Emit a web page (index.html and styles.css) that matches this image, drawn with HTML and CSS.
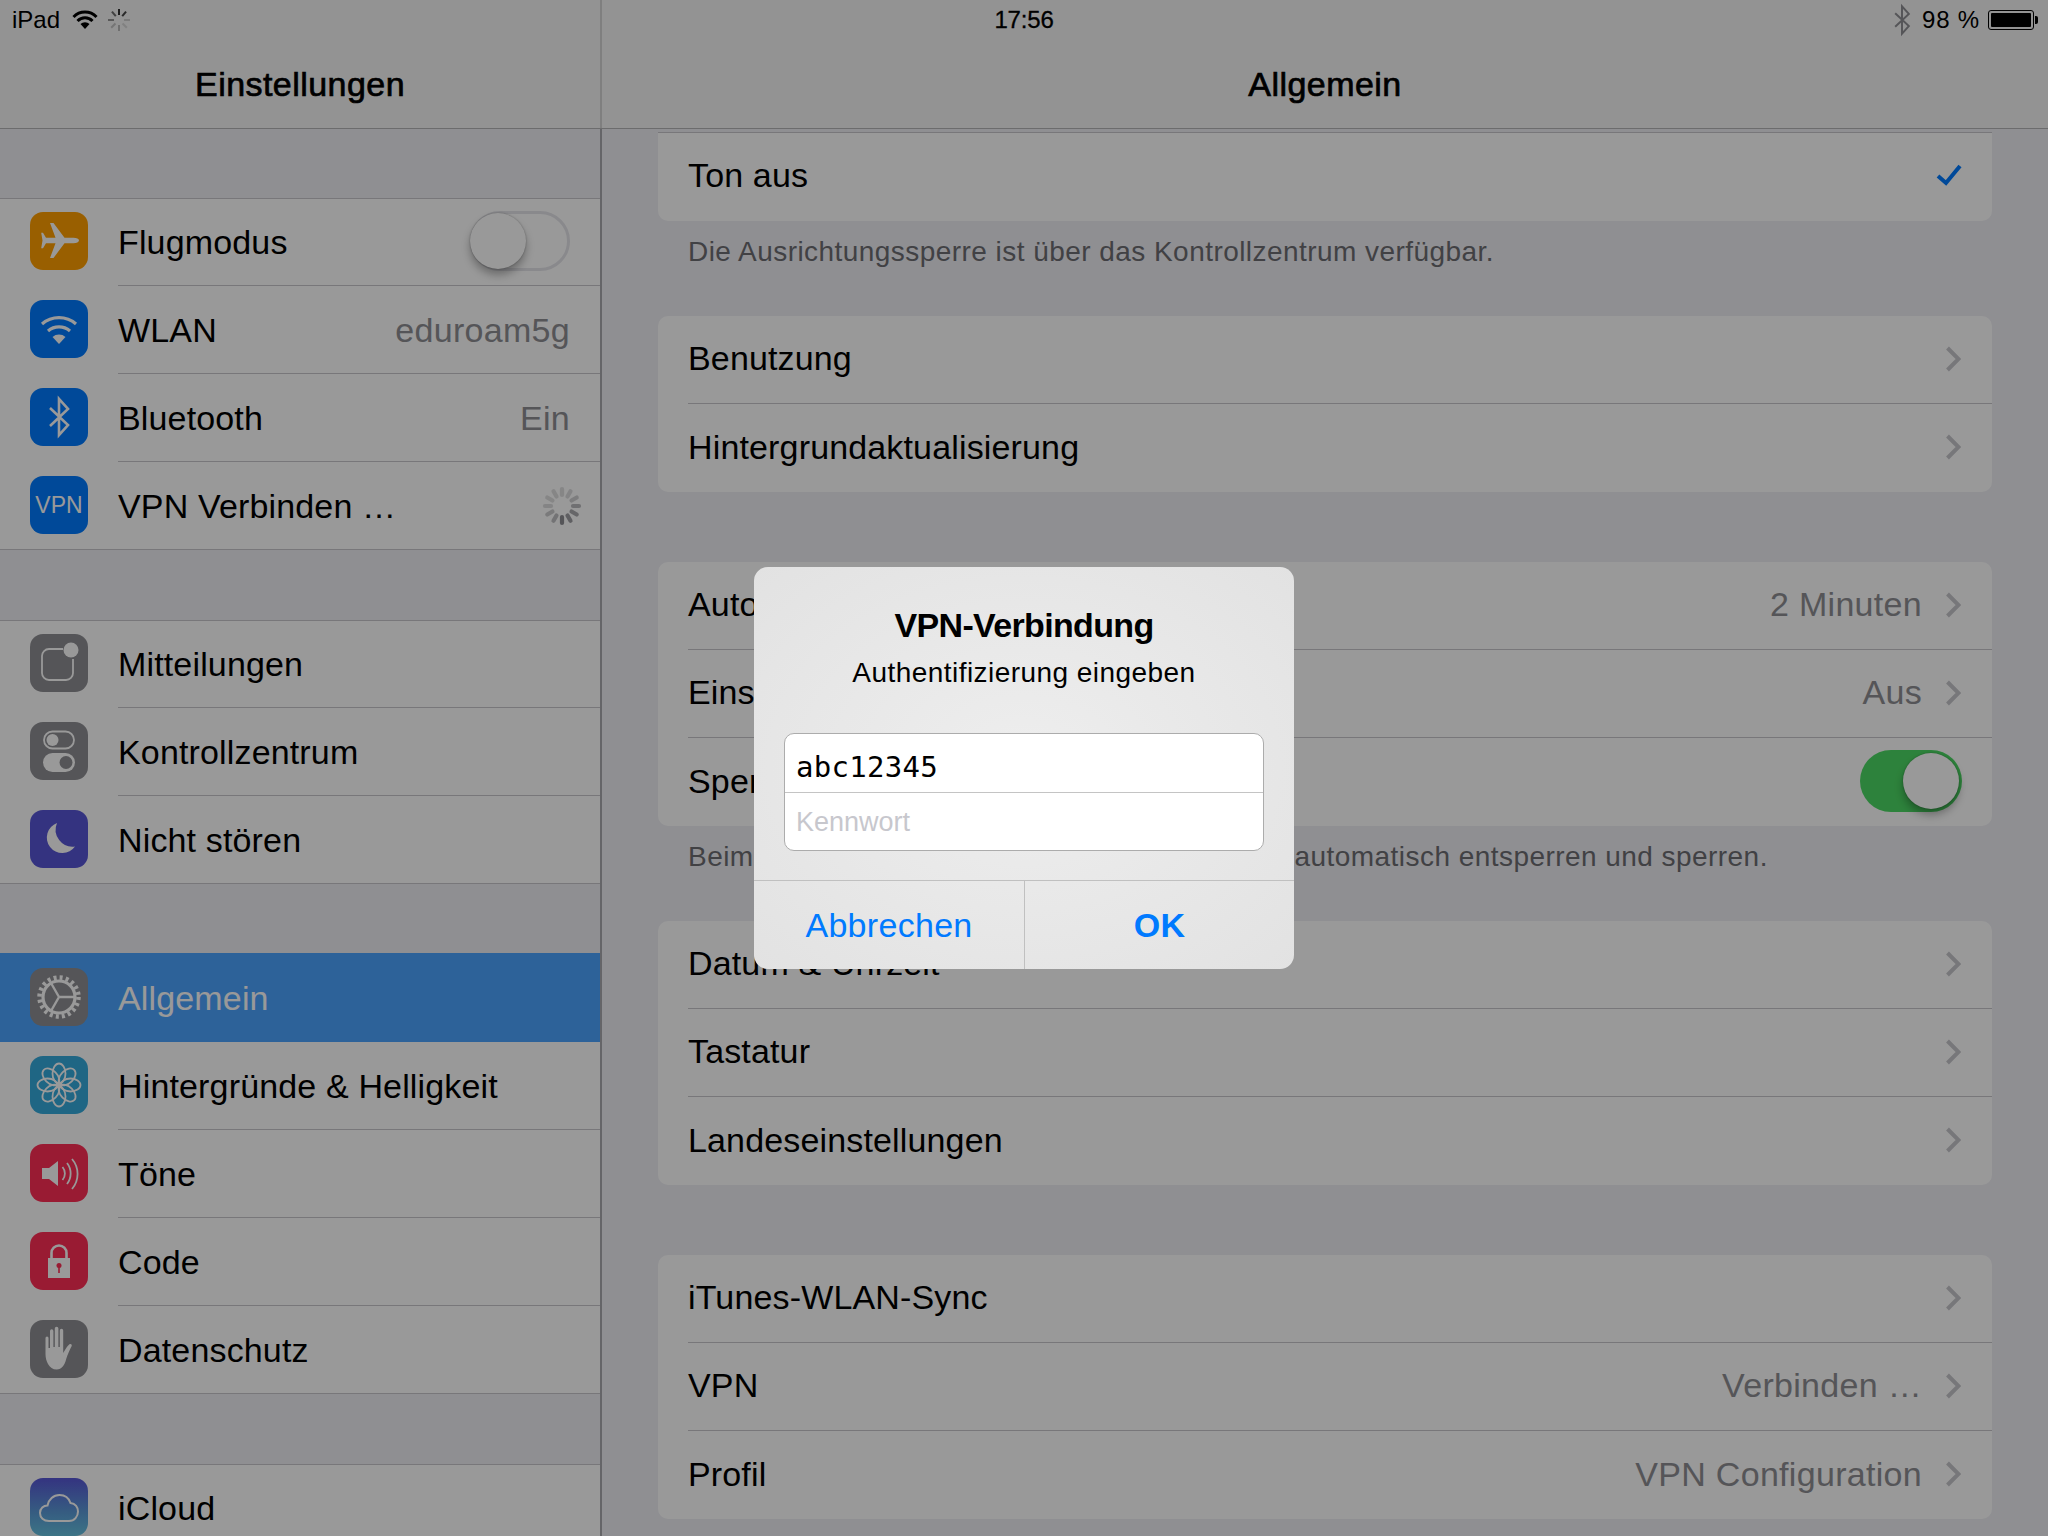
FILE: index.html
```html
<!DOCTYPE html>
<html>
<head>
  <title>Einstellungen</title>
  <meta charset="UTF-8">
  <link rel="stylesheet" href="styles.css">
</head>
<body>
  <svg class="defs" width="0" height="0">
    <symbol id="spinner" viewBox="0 0 40 40">
      <g stroke="currentColor" stroke-width="4.200" stroke-linecap="round">
        <line x1="20" y1="3" x2="20" y2="9" opacity=".28"/>
        <line x1="20" y1="3" x2="20" y2="9" opacity=".3" transform="rotate(30 20 20)"/>
        <line x1="20" y1="3" x2="20" y2="9" opacity=".4" transform="rotate(60 20 20)"/>
        <line x1="20" y1="3" x2="20" y2="9" opacity=".6" transform="rotate(90 20 20)"/>
        <line x1="20" y1="3" x2="20" y2="9" opacity=".75" transform="rotate(120 20 20)"/>
        <line x1="20" y1="3" x2="20" y2="9" opacity=".85" transform="rotate(150 20 20)"/>
        <line x1="20" y1="3" x2="20" y2="9" transform="rotate(180 20 20)"/>
        <line x1="20" y1="3" x2="20" y2="9" opacity=".55" transform="rotate(210 20 20)"/>
        <line x1="20" y1="3" x2="20" y2="9" opacity=".45" transform="rotate(240 20 20)"/>
        <line x1="20" y1="3" x2="20" y2="9" opacity=".3" transform="rotate(270 20 20)"/>
        <line x1="20" y1="3" x2="20" y2="9" opacity=".28" transform="rotate(300 20 20)"/>
        <line x1="20" y1="3" x2="20" y2="9" opacity=".28" transform="rotate(330 20 20)"/>
      </g>
    </symbol>
    <symbol id="spinner-small" viewBox="0 0 24 24">
      <g stroke="currentColor" stroke-width="2">
        <line x1="12" y1="1" x2="12" y2="7"/>
        <line x1="12" y1="1" x2="12" y2="7" opacity=".9" transform="rotate(40 12 12)"/>
        <line x1="12" y1="1" x2="12" y2="7" opacity=".2" transform="rotate(90 12 12)"/>
        <line x1="12" y1="1" x2="12" y2="7" opacity=".15" transform="rotate(135 12 12)"/>
        <line x1="12" y1="1" x2="12" y2="7" opacity=".3" transform="rotate(180 12 12)"/>
        <line x1="12" y1="1" x2="12" y2="7" opacity=".25" transform="rotate(225 12 12)"/>
        <line x1="12" y1="1" x2="12" y2="7" opacity=".5" transform="rotate(270 12 12)"/>
        <line x1="12" y1="1" x2="12" y2="7" opacity=".7" transform="rotate(320 12 12)"/>
      </g>
    </symbol>
    <symbol id="chevron" viewBox="0 0 16 26">
      <path d="M2.500 2l11 11-11 11" fill="none" stroke="currentColor" stroke-width="4"/>
    </symbol>
    <symbol id="bt" viewBox="0 0 58 58">
      <path d="M20 20l18 17-9 10V11l9 10-18 17" fill="none" stroke="currentColor" stroke-width="2.600"/>
    </symbol>
  </svg>

  <div class="app">

    <!-- status bar and titles -->
    <header class="top">
      <div class="status">
        <div class="status-left">
          <span>iPad</span>
          <svg class="status-wifi" viewBox="0 0 26 20">
            <path d="M1.500 7a16 16 0 0 1 23 0M5.500 11a10.500 10.500 0 0 1 15 0" fill="none" stroke="#000" stroke-width="3"/>
            <path d="M8.500 14a6.500 6.500 0 0 1 9 0L13 19z" fill="#000"/>
          </svg>
          <svg class="status-spinner"><use href="#spinner-small"/></svg>
        </div>
        <div class="status-time">17:56</div>
        <div class="status-right">
          <svg class="status-bt"><use href="#bt"/></svg>
          <span class="status-pct">98 %</span>
          <div class="battery"><div class="battery-fill"></div></div>
        </div>
      </div>
      <div class="titles">
        <h1 class="title">Einstellungen</h1>
        <h1 class="title">Allgemein</h1>
      </div>
    </header>

    <div class="panes">

      <!-- left column -->
      <aside class="sidebar">
        <ul class="side-group">
          <li class="side-row">
            <span class="icon icon-orange">
              <svg viewBox="0 0 58 58"><path d="M49 28.500c0-1.600-2.500-2.700-5.500-2.700H34.500L23.500 11H20l5.500 14.800H16l-3-5h-1.800l1.300 7.700-1.300 7.700H13l3-5h9.500L20 46h3.500l11-14.800h9c3 0 5.500-1.100 5.500-2.700z" fill="#fff"/></svg>
            </span>
            <span class="label">Flugmodus</span>
            <span class="switch"><span class="knob"></span></span>
          </li>
          <li class="side-row">
            <span class="icon icon-blue">
              <svg viewBox="0 0 58 58"><path d="M12 24a26 26 0 0 1 34 0M18 31a17 17 0 0 1 22 0" fill="none" stroke="#fff" stroke-width="3.200"/><path d="M22.500 37a10 10 0 0 1 13 0L29 44z" fill="#fff"/></svg>
            </span>
            <span class="label">WLAN</span>
            <span class="value">eduroam5g</span>
          </li>
          <li class="side-row">
            <span class="icon icon-blue"><svg class="icon-white"><use href="#bt"/></svg></span>
            <span class="label">Bluetooth</span>
            <span class="value">Ein</span>
          </li>
          <li class="side-row">
            <span class="icon icon-blue icon-vpn">VPN</span>
            <span class="label">VPN Verbinden …</span>
            <svg class="row-spinner"><use href="#spinner"/></svg>
          </li>
        </ul>

        <ul class="side-group">
          <li class="side-row">
            <span class="icon icon-gray">
              <svg viewBox="0 0 58 58"><path d="M33 15H19a7 7 0 0 0-7 7v17a7 7 0 0 0 7 7h17a7 7 0 0 0 7-7V25" fill="none" stroke="#fff" stroke-width="1.800"/><circle cx="41" cy="16" r="7.500" fill="#fff"/></svg>
            </span>
            <span class="label">Mitteilungen</span>
          </li>
          <li class="side-row">
            <span class="icon icon-gray">
              <svg viewBox="0 0 58 58"><rect x="14" y="9.500" width="30" height="17" rx="8.500" fill="none" stroke="#fff" stroke-width="1.800"/><circle cx="22.500" cy="18" r="6" fill="#fff"/><rect x="13" y="31" width="32" height="19" rx="9.500" fill="#fff"/><circle cx="36" cy="40.500" r="6.500" fill="#8e8e93"/></svg>
            </span>
            <span class="label">Kontrollzentrum</span>
          </li>
          <li class="side-row">
            <span class="icon icon-purple">
              <svg viewBox="0 0 58 58"><path d="M27 13a15.500 15.500 0 1 0 18 23.500A17 17 0 0 1 27 13z" fill="#fff"/></svg>
            </span>
            <span class="label">Nicht stören</span>
          </li>
        </ul>

        <ul class="side-group">
          <li class="side-row side-row-active">
            <span class="icon icon-gray">
              <svg viewBox="0 0 58 58">
                <circle cx="29" cy="29" r="19.500" fill="none" stroke="#fff" stroke-width="4.500" stroke-dasharray="3 3.130"/>
                <circle cx="29" cy="29" r="16" fill="none" stroke="#fff" stroke-width="3.200"/>
                <path d="M29 29L21 15M29 29H45M29 29L21 43" fill="none" stroke="#fff" stroke-width="2.400"/>
              </svg>
            </span>
            <span class="label">Allgemein</span>
          </li>
          <li class="side-row">
            <span class="icon icon-teal">
              <svg viewBox="0 0 58 58">
                <g fill="none" stroke="#fff" stroke-width="1.800">
                  <ellipse cx="29" cy="17.500" rx="6.500" ry="10"/>
                  <ellipse cx="29" cy="17.500" rx="6.500" ry="10" transform="rotate(45 29 29)"/>
                  <ellipse cx="29" cy="17.500" rx="6.500" ry="10" transform="rotate(90 29 29)"/>
                  <ellipse cx="29" cy="17.500" rx="6.500" ry="10" transform="rotate(135 29 29)"/>
                  <ellipse cx="29" cy="17.500" rx="6.500" ry="10" transform="rotate(180 29 29)"/>
                  <ellipse cx="29" cy="17.500" rx="6.500" ry="10" transform="rotate(225 29 29)"/>
                  <ellipse cx="29" cy="17.500" rx="6.500" ry="10" transform="rotate(270 29 29)"/>
                  <ellipse cx="29" cy="17.500" rx="6.500" ry="10" transform="rotate(315 29 29)"/>
                </g>
                <circle cx="29" cy="29" r="3.500" fill="#fff"/>
              </svg>
            </span>
            <span class="label">Hintergründe &amp; Helligkeit</span>
          </li>
          <li class="side-row">
            <span class="icon icon-red">
              <svg viewBox="0 0 58 58"><path d="M12 24h7l9-7v25l-9-7h-7z" fill="#fff"/><path d="M32.500 23a10 10 0 0 1 0 13M37 19a17 17 0 0 1 0 21M42 15a23 23 0 0 1 0 30" fill="none" stroke="#fff" stroke-width="1.800"/></svg>
            </span>
            <span class="label">Töne</span>
          </li>
          <li class="side-row">
            <span class="icon icon-red">
              <svg viewBox="0 0 58 58"><path d="M21.500 27v-6a7.500 7.500 0 0 1 15 0v6" fill="none" stroke="#fff" stroke-width="2.600"/><rect x="18" y="26" width="22" height="20" fill="#fff"/><circle cx="29" cy="33.500" r="2.500" fill="#ff2d55"/><rect x="28.200" y="34" width="1.600" height="7" fill="#ff2d55"/></svg>
            </span>
            <span class="label">Code</span>
          </li>
          <li class="side-row">
            <span class="icon icon-gray">
              <svg viewBox="0 0 58 58"><path d="M18 44c-1.500-3-2.500-6-2.500-10V18a1.500 1.500 0 0 1 3 0v10h1.500V11a1.700 1.700 0 0 1 3.400 0v16h1.400V8.500a1.800 1.800 0 0 1 3.600 0V27h1.400V10.500a1.700 1.700 0 0 1 3.400 0V33c2-3.500 4-7 6-8.500 1.500-1 3 0 2.500 1.500-2 4-4 8-5.500 13-1.500 6-4.500 10.500-9.500 10.500-4 0-6.800-2-8.700-5.500z" fill="#fff"/></svg>
            </span>
            <span class="label">Datenschutz</span>
          </li>
        </ul>

        <ul class="side-group">
          <li class="side-row">
            <span class="icon icon-cloud">
              <svg viewBox="0 0 58 58"><path d="M19 43c-5.500 0-9-3.500-9-8 0-4.500 3.500-7.500 7.500-7.500 1-6 6-10.500 12-10.500 5.500 0 9.500 3.500 11 8 5 .5 7.500 4.500 7.500 8.500 0 5-3.500 9.500-9 9.500z" fill="none" stroke="#fff" stroke-width="2"/></svg>
            </span>
            <span class="label">iCloud</span>
          </li>
        </ul>
      </aside>

      <!-- right column -->
      <main class="content">
        <div class="card card-cut">
          <div class="row">
            <span class="label">Ton aus</span>
            <svg class="check" viewBox="0 0 26 22"><path d="M2 12l8 7L24 2" fill="none" stroke="currentColor" stroke-width="4"/></svg>
          </div>
        </div>
        <p class="note">Die Ausrichtungssperre ist über das Kontrollzentrum verfügbar.</p>

        <div class="card">
          <div class="row"><span class="label">Benutzung</span><svg class="chevron"><use href="#chevron"/></svg></div>
          <div class="row"><span class="label">Hintergrundaktualisierung</span><svg class="chevron"><use href="#chevron"/></svg></div>
        </div>

        <div class="card card-gap">
          <div class="row"><span class="label">Automatische Sperre</span><span class="value">2 Minuten</span><svg class="chevron"><use href="#chevron"/></svg></div>
          <div class="row"><span class="label">Einschränkungen</span><span class="value">Aus</span><svg class="chevron"><use href="#chevron"/></svg></div>
          <div class="row"><span class="label">Sperren/Entsperren</span><span class="switch switch-on"><span class="knob"></span></span></div>
        </div>
        <p class="note">Beim Schließen und Öffnen der Hülle das iPad automatisch entsperren und sperren.</p>

        <div class="card">
          <div class="row"><span class="label">Datum &amp; Uhrzeit</span><svg class="chevron"><use href="#chevron"/></svg></div>
          <div class="row"><span class="label">Tastatur</span><svg class="chevron"><use href="#chevron"/></svg></div>
          <div class="row"><span class="label">Landeseinstellungen</span><svg class="chevron"><use href="#chevron"/></svg></div>
        </div>

        <div class="card card-gap">
          <div class="row"><span class="label">iTunes-WLAN-Sync</span><svg class="chevron"><use href="#chevron"/></svg></div>
          <div class="row"><span class="label">VPN</span><span class="value">Verbinden …</span><svg class="chevron"><use href="#chevron"/></svg></div>
          <div class="row"><span class="label">Profil</span><span class="value">VPN Configuration</span><svg class="chevron"><use href="#chevron"/></svg></div>
        </div>
      </main>
    </div>
  </div>

  <!-- alert on top of everything -->
  <div class="overlay">
    <div class="alert">
      <h2 class="alert-title">VPN-Verbindung</h2>
      <p class="alert-text">Authentifizierung eingeben</p>
      <div class="fields">
        <div class="field field-value">abc12345</div>
        <div class="field field-empty">Kennwort</div>
      </div>
      <div class="alert-buttons">
        <div class="alert-btn">Abbrechen</div>
        <div class="alert-btn alert-btn-ok">OK</div>
      </div>
    </div>
  </div>
</body>
</html>
```

FILE: styles.css
```css
* {
  box-sizing: border-box;
}

html, body {
  margin: 0;
  width: 2048px;
  height: 1536px;
  overflow: hidden;
}

body {
  font-family: "Liberation Sans", Arial, sans-serif;
  background: #efeff4;
  color: #000;
  position: relative;
}

ul {
  list-style: none;
  margin: 0;
  padding: 0;
}

.defs {
  position: absolute;
}

.app {
  height: 1536px;
  display: flex;
  flex-direction: column;
}

/* top bar */
.top {
  height: 129px;
  flex: none;
  background: linear-gradient(#d4d4d4, #d4d4d4) 600px 0 / 2px 100% no-repeat, #f5f5f5;
  border-bottom: 1px solid #b4b4b6;
}

.status {
  height: 40px;
  padding: 0 12px;
  display: grid;
  grid-template-columns: 1fr auto 1fr;
  align-items: center;
  font-size: 24px;
}

.status-left {
  display: flex;
  align-items: center;
  gap: 12px;
}

.status-wifi {
  width: 26px;
  height: 20px;
}

.status-spinner {
  width: 24px;
  height: 24px;
  margin-left: -3px;
  color: #333;
}

.status-time {
  letter-spacing: -.2px;
  -webkit-text-stroke: .3px #000;
}

.status-right {
  display: flex;
  align-items: center;
  justify-content: flex-end;
  gap: 8px;
  padding-right: 2px;
}

.status-pct {
  letter-spacing: .8px;
}

.status-bt {
  width: 44px;
  height: 44px;
  margin: -2px -10px -2px 0;
  color: #8e8e93;
}

.battery {
  width: 46px;
  height: 20px;
  padding: 2px;
  border: 1px solid #000;
  border-radius: 3px;
  position: relative;
}

.battery::after {
  content: "";
  position: absolute;
  right: -5px;
  top: 5px;
  width: 3px;
  height: 8px;
  background: #000;
  border-radius: 0 2px 2px 0;
}

.battery-fill {
  height: 100%;
  background: #000;
  border-radius: 1px;
}

.titles {
  height: 88px;
  display: grid;
  grid-template-columns: 600px 1fr;
}

.title {
  margin: 0;
  padding-top: 9px;
  text-align: center;
  font-size: 34px;
  font-weight: 400;
  line-height: 70px;
  letter-spacing: .45px;
  -webkit-text-stroke: .7px #000;
}

.title + .title {
  padding-left: 2px;
}

.panes {
  flex: 1;
  display: flex;
  min-height: 0;
}

/* left column */
.sidebar {
  width: 602px;
  flex: none;
  padding-top: 69px;
  border-right: 2px solid #a9a9ad;
  overflow: hidden;
}

.side-group {
  background: #fff;
  box-shadow: inset 0 1px 0 #c8c7cc;
  margin-bottom: 70px;
}

.side-row {
  height: 88px;
  padding: 0 30px;
  display: flex;
  align-items: center;
  position: relative;
}

.side-row::after {
  content: "";
  position: absolute;
  left: 118px;
  right: 0;
  bottom: 0;
  height: 1px;
  background: #c8c7cc;
}

.side-row:last-child::after {
  left: 0;
}

.side-row-active {
  background: #4ca4ff;
  box-shadow: 0 -1px 0 #4ca4ff;
  color: #fff;
}

.side-row-active::after {
  display: none;
}

.label {
  font-size: 34px;
  letter-spacing: .15px;
  white-space: nowrap;
  flex: 1;
}

.side-row .label {
  margin-left: 30px;
}

.value {
  font-size: 34px;
  letter-spacing: .3px;
  color: #8e8e93;
  white-space: nowrap;
}

.icon {
  width: 58px;
  height: 58px;
  flex: none;
  margin-bottom: 2px;
  border-radius: 13px;
  display: flex;
  align-items: center;
  justify-content: center;
  color: #fff;
}

.icon svg {
  width: 58px;
  height: 58px;
}

.icon-orange { background: #ff9f00; }
.icon-blue { background: #007aff; }
.icon-gray { background: #8e8e93; }
.icon-purple { background: #5856d6; }
.icon-teal { background: #34aadc; }
.icon-red { background: #ff2d55; }
.icon-cloud { background: linear-gradient(#5856d6, #5a9bd8 60%, #66c3e0); }

.icon-vpn {
  font-size: 23px;
}

.icon-white {
  color: #fff;
}

.row-spinner {
  width: 40px;
  height: 40px;
  margin-right: -12px;
  color: #8e8e93;
}

.switch {
  width: 100px;
  height: 60px;
  flex: none;
  margin-bottom: 2px;
  border: 3px solid #e5e5ea;
  border-radius: 30px;
  position: relative;
}

.knob {
  position: absolute;
  left: -3px;
  top: -1px;
  width: 56px;
  height: 56px;
  border-radius: 50%;
  background: #fff;
  box-shadow: 0 6px 8px rgba(0, 0, 0, .3), 0 0 2px rgba(0, 0, 0, .3);
}

.switch-on {
  width: 102px;
  height: 62px;
  margin-bottom: 0;
  border: none;
  border-radius: 31px;
  background: #4cd964;
}

.switch-on .knob {
  left: 43px;
  top: 3px;
}

/* right column */
.content {
  flex: 1;
  padding: 3px 56px 0;
  overflow: hidden;
}

.card {
  background: #fff;
  border-radius: 10px;
}

.card-gap {
  margin-top: 70px;
}

.card-cut {
  border-top: 1px solid #c8c7cc;
  border-radius: 0 0 10px 10px;
}

.card-cut .row {
  padding-bottom: 4px;
}

.row {
  height: 88px;
  margin-left: 30px;
  padding-right: 30px;
  padding-bottom: 2px;
  display: flex;
  align-items: center;
  border-bottom: 1px solid #c8c7cc;
}

.row:last-child {
  border-bottom: none;
}

.chevron {
  width: 16px;
  height: 26px;
  margin-left: 23px;
  margin-right: 1px;
  flex: none;
  color: #c7c7cc;
}

.check {
  width: 26px;
  height: 22px;
  color: #007aff;
}

.note {
  height: 95px;
  margin: 0;
  padding: 14px 0 0 30px;
  font-size: 28px;
  line-height: 34px;
  letter-spacing: .45px;
  color: #6d6d72;
  white-space: nowrap;
}

/* alert */
.overlay {
  position: absolute;
  inset: 0;
  background: rgba(0, 0, 0, .4);
  display: flex;
  align-items: center;
  justify-content: center;
}

.alert {
  width: 540px;
  height: 402px;
  border-radius: 14px;
  background: radial-gradient(ellipse at center, #eeeeee 0%, #e2e2e2 100%);
  display: flex;
  flex-direction: column;
  text-align: center;
  overflow: hidden;
}

.alert-title {
  margin: 38px 0 0;
  font-size: 34px;
  line-height: 40px;
  font-weight: 700;
  letter-spacing: -.65px;
}

.alert-text {
  margin: 10px 0 0;
  font-size: 28px;
  line-height: 36px;
  letter-spacing: .45px;
}

.fields {
  margin: 42px 30px 0;
  height: 118px;
  background: #fff;
  border: 1px solid #acacac;
  border-radius: 10px;
  text-align: left;
}

.field {
  padding-left: 11px;
  display: flex;
  align-items: center;
}

.field-value {
  height: 59px;
  padding-top: 7px;
  font-family: "DejaVu Sans Mono", monospace;
  font-size: 29px;
  letter-spacing: .3px;
  border-bottom: 1px solid #c4c4c4;
}

.field-empty {
  height: 57px;
  padding-top: 2px;
  font-size: 27px;
  color: #c7c7cd;
}

.alert-buttons {
  margin-top: auto;
  height: 89px;
  display: grid;
  grid-template-columns: 270px 1fr;
  border-top: 1px solid #c0c0c0;
}

.alert-btn {
  font-size: 34px;
  line-height: 88px;
  letter-spacing: .3px;
  color: #007aff;
}

.alert-btn + .alert-btn {
  border-left: 1px solid #c0c0c0;
}

.alert-btn-ok {
  font-weight: 700;
}
```
